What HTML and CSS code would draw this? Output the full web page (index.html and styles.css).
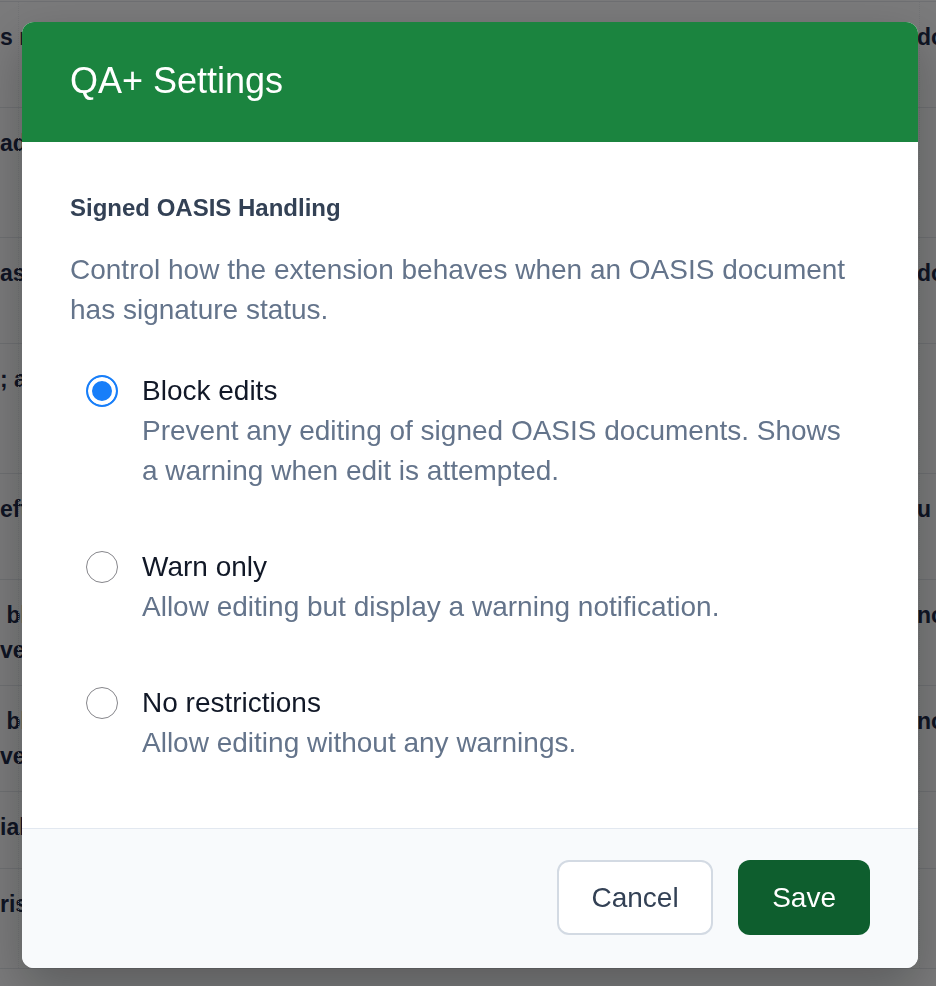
FILE: index.html
```html
<!DOCTYPE html>
<html lang="en">
<head>
    <meta charset="UTF-8">
    <meta name="viewport" content="width=device-width, initial-scale=1.0">
    <title>QA+ Settings</title>
    <link rel="stylesheet" href="styles.css">
</head>
<body>
    <div class="page">
        <div class="row tall1"><div class="c1">s not</div><div class="c2"></div><div class="c3">do</div></div>
        <div class="row tall2"><div class="c1">ad</div><div class="c2"></div><div class="c3"></div></div>
        <div class="row tall1"><div class="c1">as</div><div class="c2"></div><div class="c3">do</div></div>
        <div class="row tall2"><div class="c1">; a</div><div class="c2"></div><div class="c3"></div></div>
        <div class="row tall1"><div class="c1">eft</div><div class="c2"></div><div class="c3">u c</div></div>
        <div class="row tall1"><div class="c1">&nbsp;bl<br>ve</div><div class="c2"></div><div class="c3">no</div></div>
        <div class="row tall1"><div class="c1">&nbsp;bl<br>ve</div><div class="c2"></div><div class="c3">no</div></div>
        <div class="row short"><div class="c1">ial</div><div class="c2"></div><div class="c3"></div></div>
        <div class="row mid"><div class="c1">ris</div><div class="c2"></div><div class="c3"></div></div>
    </div>

    <div class="overlay">
        <div class="modal">
            <div class="modal-header">
                <h2>QA+ Settings</h2>
            </div>
            <div class="modal-body">
                <h3>Signed OASIS Handling</h3>
                <p class="intro">Control how the extension behaves when an OASIS document has signature status.</p>
                <div class="options">
                    <label class="option">
                        <input type="radio" name="mode" value="block" checked>
                        <span class="option-text">
                            <span class="option-title">Block edits</span>
                            <span class="option-desc">Prevent any editing of signed OASIS documents. Shows a warning when edit is attempted.</span>
                        </span>
                    </label>
                    <label class="option">
                        <input type="radio" name="mode" value="warn">
                        <span class="option-text">
                            <span class="option-title">Warn only</span>
                            <span class="option-desc">Allow editing but display a warning notification.</span>
                        </span>
                    </label>
                    <label class="option">
                        <input type="radio" name="mode" value="none">
                        <span class="option-text">
                            <span class="option-title">No restrictions</span>
                            <span class="option-desc">Allow editing without any warnings.</span>
                        </span>
                    </label>
                </div>
            </div>
            <div class="modal-footer">
                <button class="btn btn-cancel">Cancel</button>
                <button class="btn btn-save">Save</button>
            </div>
        </div>
    </div>
</body>
</html>
```

FILE: styles.css
```css
* {
    box-sizing: border-box;
}

body {
    margin: 0;
    padding: 0;
    overflow: hidden;
    background-color: #f4f5f7;
    font-family: "Liberation Sans", Arial, sans-serif;
}

/* table behind the dialog */
.page {
    height: 100vh;
    overflow: hidden;
    border-top: 1px solid #dcdfe4;
    margin-top: 1px;
}

.row {
    display: flex;
    border-bottom: 1px solid #dcdfe4;
    font-size: 23px;
    font-weight: bold;
    line-height: 35px;
    color: #1f2a48;
}

.tall1 {
    height: 106px;
}

.tall2 {
    height: 130px;
}

.short {
    height: 77px;
}

.mid {
    height: 100px;
}

.c1 {
    width: 18px;
    padding-top: 18px;
    white-space: nowrap;
}

.c2 {
    flex: 1;
    border-left: 1px dotted #e4e6ea;
}

.c3 {
    width: 17px;
    padding-top: 18px;
    border-left: 1px dotted #e4e6ea;
    white-space: nowrap;
    text-indent: -3px;
}

/* dialog */
.overlay {
    position: fixed;
    inset: 0;
    background-color: rgba(0, 0, 0, 0.5);
    display: flex;
    align-items: flex-start;
    padding: 22px 18px 18px 22px;
}

.modal {
    width: 896px;
    background-color: #fff;
    border-radius: 12px;
    overflow: hidden;
    box-shadow: 0 20px 50px rgba(0, 0, 0, 0.25);
}

.modal-header {
    height: 120px;
    background-color: #1b843f;
    display: flex;
    align-items: center;
    padding: 0 48px 3px;
}

.modal-header h2 {
    margin: 0;
    color: #fff;
    font-size: 36px;
    font-weight: normal;
    line-height: 1;
}

.modal-body {
    padding: 50px 48px 65px;
}

.modal-body h3 {
    margin: 0 0 26px;
    font-size: 24px;
    line-height: 32px;
    color: #334155;
}

.intro {
    margin: 0 0 41px;
    font-size: 28px;
    line-height: 40px;
    color: #64748b;
}

.options {
    display: flex;
    flex-direction: column;
    gap: 56px;
}

.option {
    display: flex;
    gap: 24px;
    padding-left: 16px;
    padding-right: 20px;
    cursor: pointer;
}

.option input {
    appearance: none;
    -webkit-appearance: none;
    flex-shrink: 0;
    width: 32px;
    height: 32px;
    margin: 4px 0 0;
    border: 1.5px solid #86868b;
    border-radius: 50%;
    background-color: #fff;
}

.option input:checked {
    border: 2.5px solid #177ef9;
    background-color: #177ef9;
    box-shadow: inset 0 0 0 4px #fff;
}

.option-text {
    display: flex;
    flex-direction: column;
    font-size: 28px;
    line-height: 40px;
}

.option-title {
    color: #111827;
}

.option-desc {
    color: #64748b;
}

.modal-footer {
    display: flex;
    justify-content: flex-end;
    gap: 25px;
    padding: 31px 48px 33px;
    border-top: 1px solid #e2e8f0;
    background-color: #f8fafc;
}

.btn {
    height: 75px;
    padding: 0 32px;
    border: 2px solid transparent;
    border-radius: 12px;
    font-family: inherit;
    font-size: 28px;
}

.btn-cancel {
    padding: 0 32.5px;
    background-color: #fff;
    border-color: #d3dae3;
    color: #334155;
}

.btn-save {
    background-color: #0e5e2e;
    color: #fff;
}
```
